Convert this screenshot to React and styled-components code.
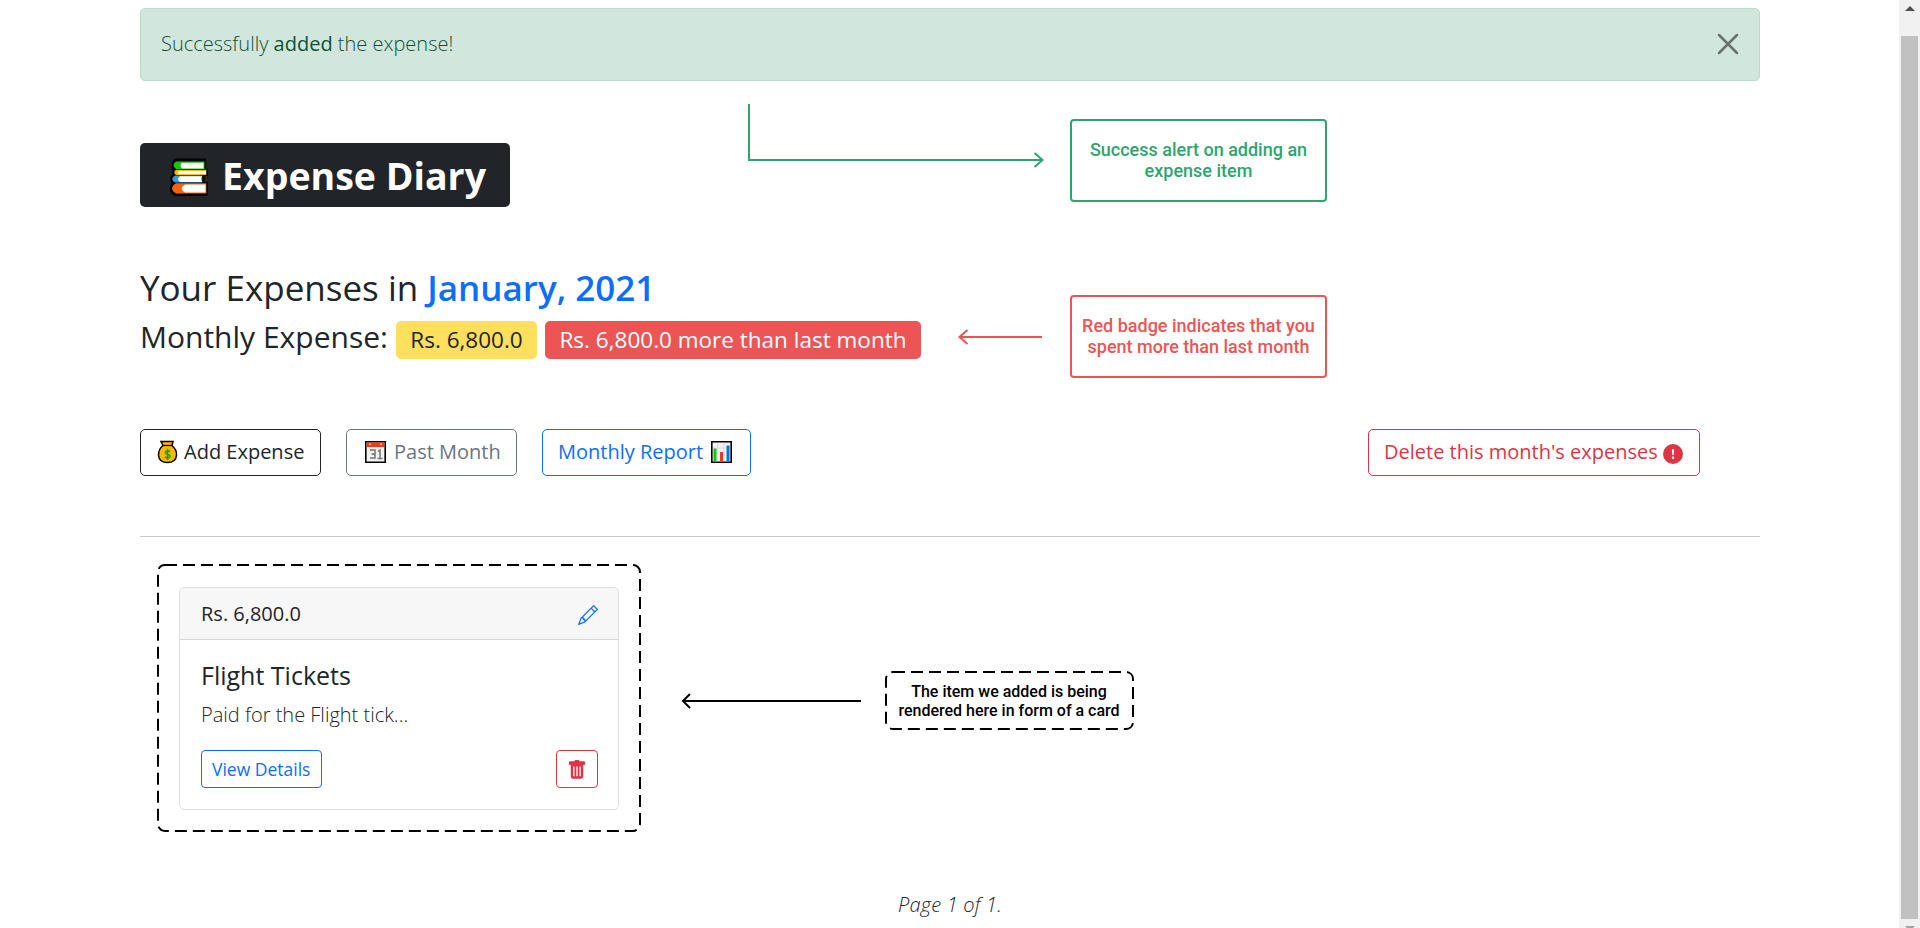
import React from "react";
import styled, { createGlobalStyle, css } from "styled-components";
import { BsPencil, BsTrashFill, BsExclamationCircleFill } from "react-icons/bs";

const Global = createGlobalStyle`
  *, *::before, *::after { box-sizing: border-box; }
  html, body { margin: 0; height: 928px; overflow: hidden; background: #fff; }
  body { font: 300 20px/1.5 "Open Sans", "Noto Sans", sans-serif; color: #212529; }
  h1, h3, h4, h5, p { margin: 0; }
  svg { display: block; flex: none; }
`;

const Screen = styled.div`
  display: flex;
  height: 928px;
  overflow: hidden;
`;

const Page = styled.main`
  flex: 1;
  padding: 8px 139px 0 140px;
`;

const Alert = styled.div`
  display: flex;
  align-items: center;
  justify-content: space-between;
  height: 73px;
  padding: 0 20px 2px;
  border: 1px solid #badbcc;
  border-radius: 5px;
  background: #d1e7dd;
  color: #0f5132;
  strong { font-weight: 500; }
`;

const CloseButton = styled.button`
  display: flex;
  padding: 0;
  border: 0;
  background: none;
  color: #000;
  opacity: 0.5;
`;

const HeroRow = styled.section`
  display: flex;
  align-items: flex-start;
  height: 186px;
`;

const Title = styled.h1`
  display: flex;
  align-items: center;
  width: 370px;
  height: 64px;
  margin-top: 62px;
  padding: 2px 0 0 28px;
  border-radius: 5px;
  background: #212529;
  color: #fff;
  font-size: 37.5px;
  font-weight: 700;
  line-height: 1;
  white-space: nowrap;
  svg { margin-right: 13px; }
`;

const Arrow = styled.svg.attrs({ fill: "none", strokeWidth: 2 })`
  margin: ${(p) => p.$margin};
  stroke: ${(p) => p.$color};
`;

const Callout = styled.div`
  display: flex;
  align-items: center;
  justify-content: center;
  width: 257px;
  height: 83px;
  margin-top: ${(p) => p.$top}px;
  padding-bottom: 2px;
  border: 2px solid ${(p) => p.$color};
  border-radius: 4px;
  color: ${(p) => p.$color};
  font: 500 18px/21px Roboto, sans-serif;
  text-align: center;
  white-space: nowrap;
`;

const SummaryRow = styled.section`
  display: flex;
  align-items: flex-start;
  height: 162px;
`;

const Summary = styled.div`
  flex: none;
  width: 781px;
`;

const Heading = styled.h3`
  margin-bottom: 10px;
  font-size: 35px;
  font-weight: 400;
  line-height: 42px;
  white-space: nowrap;
  span { color: #0d6efd; font-weight: 600; }
`;

const Total = styled.h4`
  display: flex;
  font-size: 30px;
  font-weight: 400;
  line-height: 36px;
  white-space: nowrap;
`;

const TotalLabel = styled.span`
  flex: none;
  width: 256px;
`;

const Badge = styled.span`
  flex: none;
  height: 38px;
  width: ${(p) => p.$width}px;
  margin: 2px 8px 0 0;
  border-radius: 5px;
  background: ${(p) => p.$bg};
  color: ${(p) => p.$fg};
  font-size: 22.5px;
  line-height: 37px;
  text-align: center;
`;

const Toolbar = styled.nav`
  display: flex;
  gap: 25px;
  height: 107px;
  padding-right: 60px;
`;

const Button = styled.button`
  display: flex;
  align-items: center;
  width: ${(p) => p.$width}px;
  height: 47px;
  padding: 0 0 2px 15px;
  border: 1px solid ${(p) => p.$color};
  border-radius: 5px;
  background: #fff;
  color: ${(p) => p.$color};
  font: 400 20px/30px "Open Sans", sans-serif;
  white-space: nowrap;
  ${(p) => p.$end && css`margin-left: auto;`}
  ${(p) =>
    p.$small &&
    css`
      height: 38px;
      padding: 0 0 0 10px;
      border-radius: 4px;
      font-size: 17.5px;
    `}
`;

const AlertIcon = styled(BsExclamationCircleFill)`
  margin: 5px 0 0 5px;
`;

const TrashIcon = styled(BsTrashFill)`
  margin-top: 2px;
`;

const Divider = styled.hr`
  height: 1px;
  margin: 0;
  border: 0;
  background: #c8c9ca;
`;

const CardRow = styled.section`
  display: flex;
  align-items: flex-start;
  height: 353px;
  padding: 27px 0 0 17px;
`;

const OutlineRect = styled.rect`
  fill: none;
  stroke: #000;
  stroke-width: 2;
`;

const DashedBox = styled.div`
  position: relative;
  width: ${(p) => p.$width}px;
  height: ${(p) => p.$height}px;
  margin-top: ${(p) => p.$top || 0}px;
  padding: ${(p) => p.$padding || 0};
  > svg { position: absolute; inset: 0; }
`;

const Note = styled.p`
  color: #000;
  font: 500 16px/19px Roboto, sans-serif;
  text-align: center;
  white-space: nowrap;
`;

const Card = styled.article`
  width: 440px;
  height: 223px;
  border: 1px solid #dfdfdf;
  border-radius: 5px;
  overflow: hidden;
`;

const CardHeader = styled.header`
  display: flex;
  align-items: center;
  justify-content: space-between;
  height: 52px;
  padding: 0 20px 0 21px;
  border-bottom: 1px solid #d6d6d6;
  background: #f7f7f7;
  font-weight: 400;
  svg { margin-top: 2px; color: #0d6efd; }
`;

const CardBody = styled.div`
  padding: 20px 20px 0 21px;
`;

const CardTitle = styled.h5`
  margin-bottom: 10px;
  font-size: 25px;
  font-weight: 400;
  line-height: 30px;
`;

const CardActions = styled.div`
  display: flex;
  justify-content: space-between;
  margin-top: 20px;
`;

const PageCount = styled.p`
  font-style: italic;
  letter-spacing: 0.2px;
  text-align: center;
`;

const Scrollbar = styled.aside`
  display: flex;
  flex-direction: column;
  align-items: center;
  width: 21px;
  background: #f1f1f1;
`;

const Thumb = styled.div`
  flex: none;
  width: 17px;
  height: 883px;
  margin: 25px 0 7px;
  background: #c1c1c1;
`;

const UpArrow = styled.div`
  margin-top: 6px;
  border: 5px solid transparent;
  border-top: 0;
  border-bottom-color: #505050;
`;

const DownArrow = styled.div`
  border: 5px solid transparent;
  border-bottom: 0;
  border-top-color: #a3a3a3;
`;

const Books = () => (
  <svg width="41" height="42" viewBox="0 0 41 42">
    <path d="M7 3.500H38V13.500H40V21H36.500V27H40V39.500L38 41H7Q2 39 2 33.500Q2 30 4 28.500Q0 23 4.500 19.500V15Q2 8 7 3.500Z" fill="#000" />
    <path d="M8 6.500H36.500V14H8Q3 10 8 6.500Z" fill="#16c60c" />
    <path d="M14 7.800H35.500V13.500H14Q11 10.500 14 7.800Z" fill="#fff" />
    <path d="M8 14.800H38.300V20H8Q4.500 17.500 8 14.800Z" fill="#ffb900" />
    <path d="M11 16H38V19H11Q8.500 17.500 11 16Z" fill="#fff" />
    <path d="M7 20.500H34.300V27.500H7Q1.500 24 7 20.500Z" fill="#3a96dd" />
    <path d="M12 21.200H34L33 24L34 27H12Q8 24 12 21.200Z" fill="#fff" />
    <path d="M8 28.300H38.300V38.500H8Q0 33.500 8 28.300Z" fill="#f7630c" />
    <path d="M17 29.500H37.500V37.500H17Q10.500 33.500 17 29.500Z" fill="#fff" />
  </svg>
);

const MoneyBag = () => (
  <svg width="28" height="24" viewBox="0 0 28 24">
    <path d="M5 1.500H17L16 5.500Q21 10 20.500 15Q20 22.500 11.500 22.500Q3 22.500 2.500 15Q2.500 9 7 5.500Z" fill="#ffb900" stroke="#000" strokeWidth="1.500" />
    <path d="M7 5.500H16" stroke="#000" strokeWidth="1.300" />
    <path d="M14.300 11.500Q11.500 9.800 9.600 11.500Q8.700 13.600 11.600 14.300Q14.800 15.200 13.600 17.400Q11.400 18.600 8.800 17M11.600 8.800V20" fill="none" stroke="#13a10e" strokeWidth="1.500" />
  </svg>
);

const Calendar = () => (
  <svg width="32" height="24" viewBox="0 0 32 24">
    <path d="M3.800 1.800H23.200V22.200H3.800Z" fill="#f2f2f2" stroke="#000" strokeWidth="1.600" />
    <path d="M4.500 2.500H22.500V7H4.500Z" fill="#f03a17" />
    <path d="M7 3.500H9V5H7ZM18 3.500H20V5H18Z" fill="#ffb3a5" />
    <path d="M8 10H13V18H8M9.500 14H13M16 11.500L18 10V18.500M15.500 18.500H20.500" fill="none" stroke="#767676" strokeWidth="1.500" />
  </svg>
);

const BarChart = () => (
  <svg width="30" height="24" viewBox="0 0 30 24">
    <path d="M8.800 1.800H28.200V22.200H8.800Z" fill="#f2f2f2" stroke="#000" strokeWidth="1.600" />
    <path d="M14.500 3V21M21 3V21M10 8H27" stroke="#ddd" />
    <path d="M10.500 8.500H13.500V21.500H10.500Z" fill="#16c60c" />
    <path d="M17 12H20V21.500H17Z" fill="#f03a17" />
    <path d="M23.500 5.500H26.500V21.500H23.500Z" fill="#0078d7" />
  </svg>
);

const GREEN = "#2ea56f";
const RED = "#eb5556";

export default function App() {
  return (
    <Screen>
      <Global />
      <Page>
        <Alert>
          <p>Successfully <strong>added</strong> the expense!</p>
          <CloseButton aria-label="Close">
            <svg width="22" height="22" viewBox="0 0 22 22" fill="none" stroke="currentColor" strokeWidth="2.500" strokeLinecap="round">
              <path d="M2 2L20 20M20 2L2 20" />
            </svg>
          </CloseButton>
        </Alert>

        <HeroRow>
          <Title><Books />Expense Diary</Title>
          <Arrow width="300" height="66" viewBox="0 0 300 66" $margin="23px 25px 0 235px" $color={GREEN}>
            <path d="M4 0V56H297M289.500 49L297.500 56L289.500 63" />
          </Arrow>
          <Callout $top={38} $color={GREEN}>Success alert on adding an<br />expense item</Callout>
        </HeroRow>

        <SummaryRow>
          <Summary>
            <Heading>Your Expenses in <span>January, 2021</span></Heading>
            <Total>
              <TotalLabel>Monthly Expense:</TotalLabel>
              <Badge $width={141} $bg="#ffdf5d" $fg="#212529">Rs. 6,800.0</Badge>
              <Badge $width={376} $bg="#eb5556" $fg="#fff">Rs. 6,800.0 more than last month</Badge>
            </Total>
          </Summary>
          <Arrow width="91" height="20" viewBox="0 0 91 20" $margin="60px 28px 0 30px" $color={RED}>
            <path d="M91 10H9M16.500 3L8.500 10L16.500 17" />
          </Arrow>
          <Callout $top={28} $color={RED}>Red badge indicates that you<br />spent more than last month</Callout>
        </SummaryRow>

        <Toolbar>
          <Button $width={181} $color="#212529"><MoneyBag />Add Expense</Button>
          <Button $width={171} $color="#6c757d"><Calendar />Past Month</Button>
          <Button $width={209} $color="#0d6efd">Monthly Report<BarChart /></Button>
          <Button $width={332} $color="#dc3545" $end>Delete this month's expenses<AlertIcon size={20} /></Button>
        </Toolbar>

        <Divider />

        <CardRow>
          <DashedBox $width={484} $height={268} $padding="23px 22px">
            <svg width="484" height="268"><OutlineRect x="1" y="1" width="482" height="266" rx="7" strokeDasharray="12 6" /></svg>
            <Card>
              <CardHeader>Rs. 6,800.0<BsPencil size={20} /></CardHeader>
              <CardBody>
                <CardTitle>Flight Tickets</CardTitle>
                <p>Paid for the Flight tick...</p>
                <CardActions>
                  <Button $small $width={121} $color="#0d6efd">View Details</Button>
                  <Button $small $width={42} $color="#dc3545" aria-label="Delete"><TrashIcon size={20} /></Button>
                </CardActions>
              </CardBody>
            </Card>
          </DashedBox>
          <Arrow width="181" height="20" viewBox="0 0 181 20" $margin="127px 23px 0 40px" $color="#000">
            <path d="M180 10H2M9 3L2 10L9 17" />
          </Arrow>
          <DashedBox $width={249} $height={59} $top={107} $padding="11px 1px 0 0">
            <svg width="249" height="59"><OutlineRect x="1" y="1" width="247" height="57" rx="7" strokeDasharray="12 6" /></svg>
            <Note>The item we added is being<br />rendered here in form of a card</Note>
          </DashedBox>
        </CardRow>

        <PageCount>Page 1 of 1.</PageCount>
      </Page>
      <Scrollbar>
        <UpArrow />
        <Thumb />
        <DownArrow />
      </Scrollbar>
    </Screen>
  );
}
